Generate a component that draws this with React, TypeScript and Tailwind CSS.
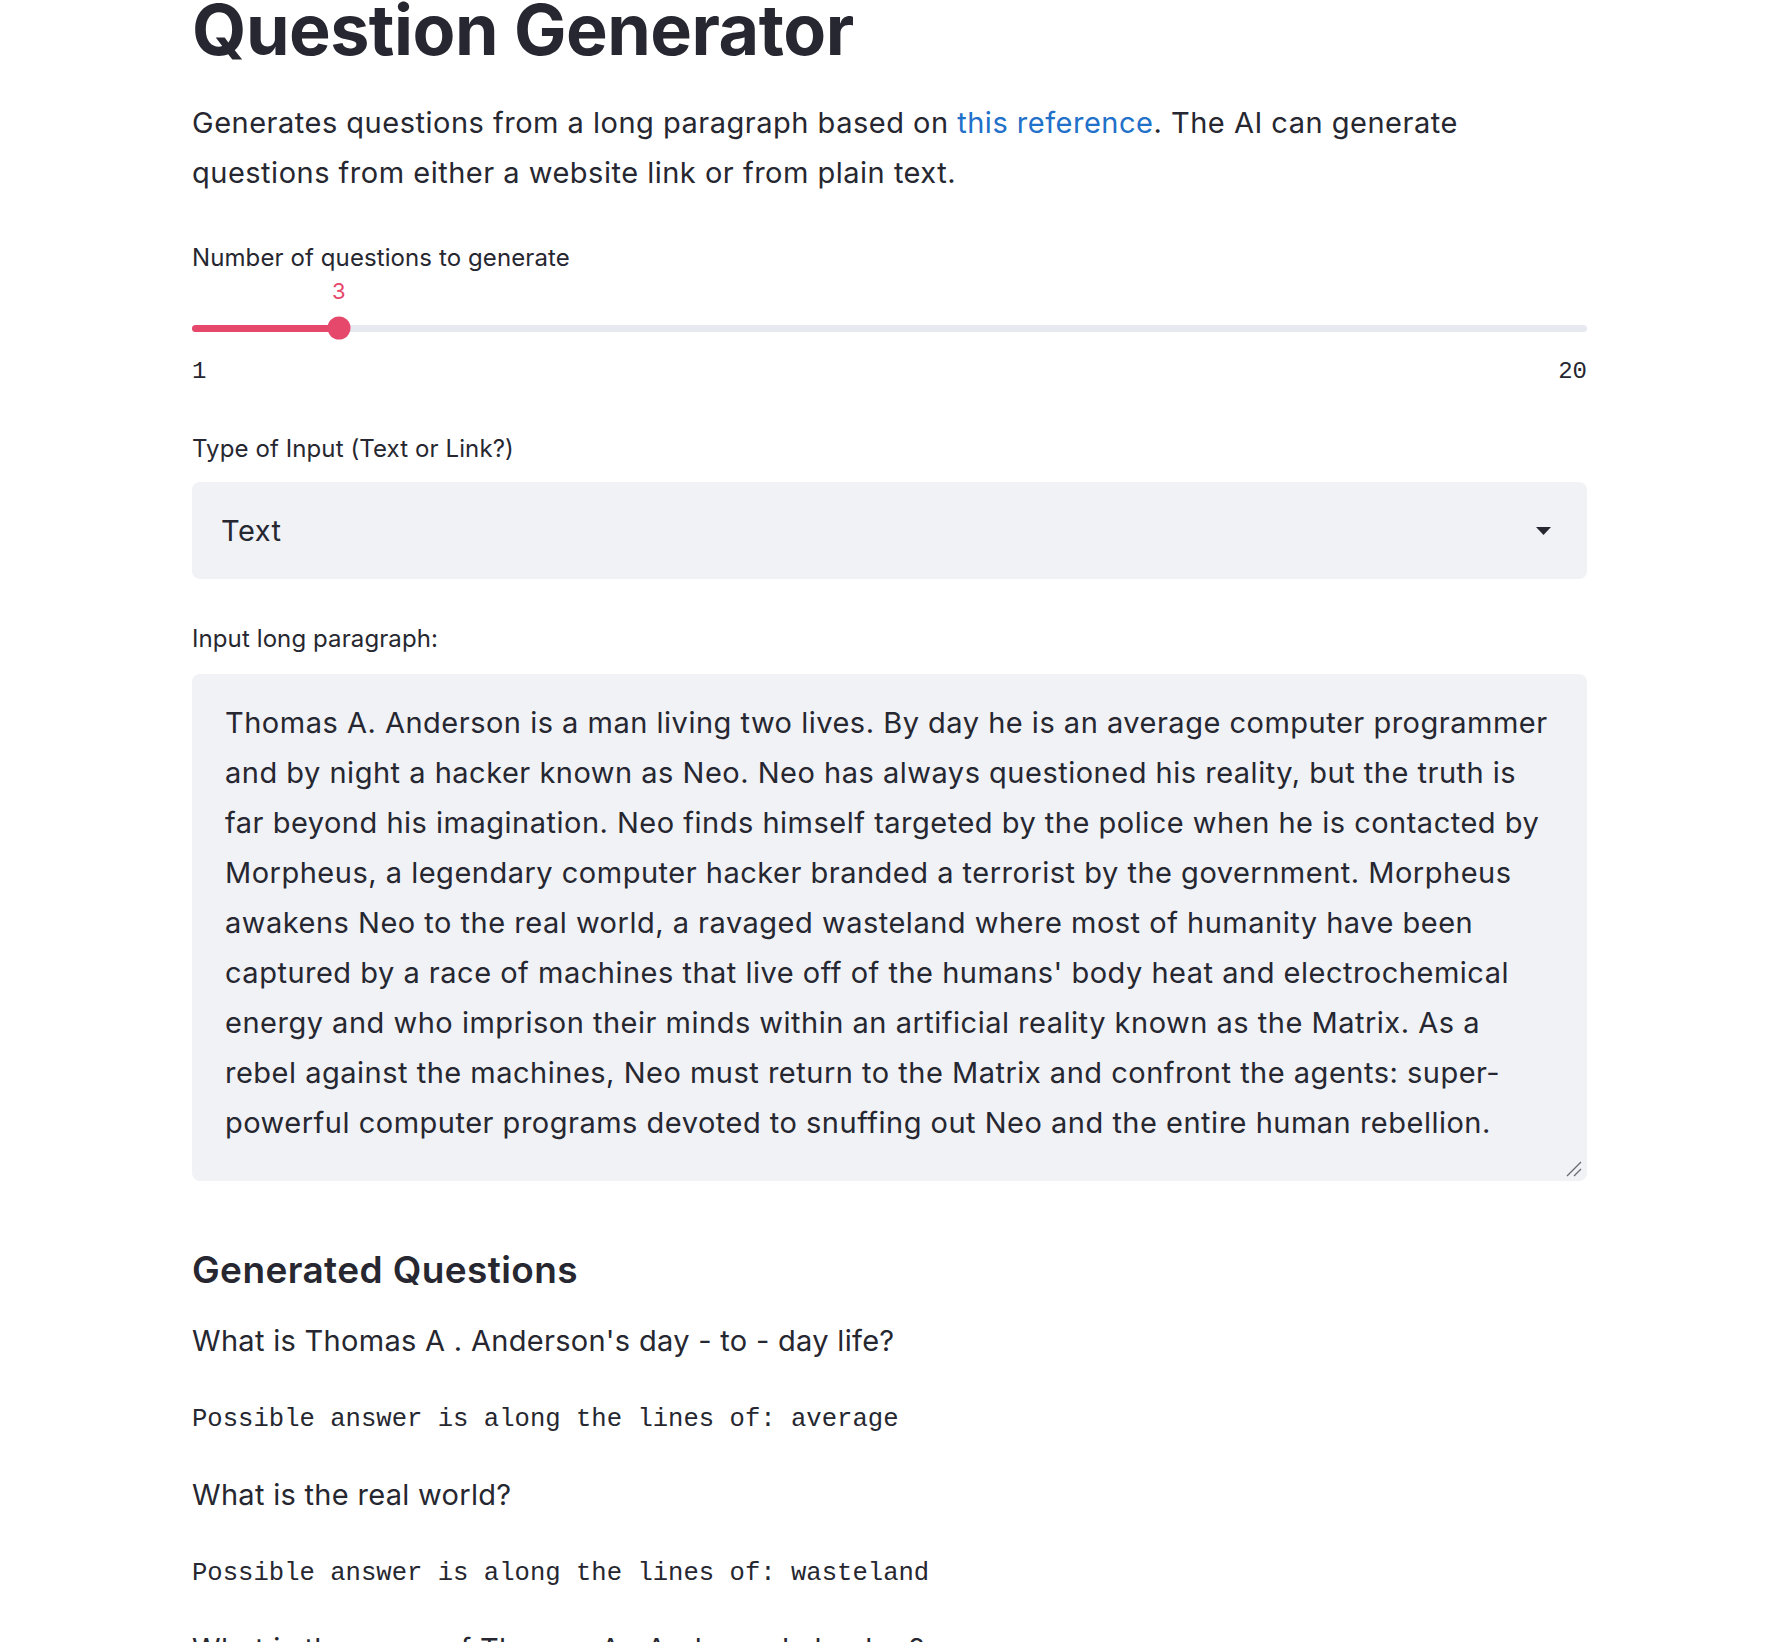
import { useState } from "react";

const paragraphLines = [
  "Thomas A. Anderson is a man living two lives. By day he is an average computer programmer",
  "and by night a hacker known as Neo. Neo has always questioned his reality, but the truth is",
  "far beyond his imagination. Neo finds himself targeted by the police when he is contacted by",
  "Morpheus, a legendary computer hacker branded a terrorist by the government. Morpheus",
  "awakens Neo to the real world, a ravaged wasteland where most of humanity have been",
  "captured by a race of machines that live off of the humans' body heat and electrochemical",
  "energy and who imprison their minds within an artificial reality known as the Matrix. As a",
  "rebel against the machines, Neo must return to the Matrix and confront the agents: super-",
  "powerful computer programs devoted to snuffing out Neo and the entire human rebellion.",
];

const questions = [
  { q: "What is Thomas A . Anderson's day - to - day life?", a: "average" },
  { q: "What is the real world?", a: "wasteland" },
  { q: "What is the name of Thomas A . Anderson's hacker?", a: "Neo" },
];

export default function App() {
  const min = 1;
  const max = 20;
  const [value] = useState(3);
  const [text, setText] = useState(paragraphLines.join("\n"));
  const pct = ((value - min) / (max - min)) * 100;

  return (
    <div className="min-h-screen bg-white text-[#262730] font-['Inter',sans-serif]">
      <main className="ml-[192px] w-[1395px] pb-20">
        <h1 className="text-[70px] font-bold leading-[60px] tracking-[-0.5px]">Question Generator</h1>

        <p className="mt-[38px] text-[29px] leading-[50px] tracking-[0.5px]">
          Generates questions from a long paragraph based on{" "}
          <a href="#" className="text-[#2170c9]">
            this reference
          </a>
          . The AI can generate
          <br />
          questions from either a website link or from plain text.
        </p>

        {/* Slider */}
        <label className="mt-[45px] block text-[24px] leading-[30px] tracking-[0.1px]">
          Number of questions to generate
        </label>
        <div className="relative mt-[5px] h-[26px]">
          <span
            className="absolute top-0 -translate-x-1/2 text-[22px] leading-[26px] text-[#e5486b]"
            style={{ left: `${pct}%` }}
          >
            {value}
          </span>
        </div>
        <div className="relative mt-[12px] flex h-[24px] items-center">
          <div className="h-[7px] w-full rounded-full bg-[#e6e9f0]" />
          <div className="absolute left-0 h-[7px] rounded-full bg-[#e5486b]" style={{ width: `${pct}%` }} />
          <div
            className="absolute top-1/2 h-[23px] w-[23px] -translate-x-1/2 -translate-y-1/2 rounded-full bg-[#e5486b]"
            style={{ left: `${pct}%` }}
          />
        </div>
        <div className="mt-[18px] flex justify-between font-['Liberation_Mono',monospace] text-[24px] leading-[28px]">
          <span>{min}</span>
          <span>{max}</span>
        </div>

        {/* Select */}
        <label className="mt-[48px] block text-[24px] leading-[30px] tracking-[0.1px]">
          Type of Input (Text or Link?)
        </label>
        <div className="mt-[18px] flex h-[97px] items-center justify-between rounded-[8px] bg-[#f0f2f6] pl-[29px] pr-[36px]">
          <span className="text-[29px] tracking-[0.5px]">Text</span>
          <svg width="15" height="8" viewBox="0 0 15 8">
            <path d="M0 0 H15 L7.5 8 Z" fill="#262730" />
          </svg>
        </div>

        {/* Textarea */}
        <label className="mt-[45px] block text-[24px] leading-[30px] tracking-[0.1px]">Input long paragraph:</label>
        <div className="relative mt-[20px]">
          <textarea
            value={text}
            onChange={(e) => setText(e.target.value)}
            className="block h-[507px] w-full resize-none overflow-hidden whitespace-pre rounded-[8px] bg-[#f0f2f6] px-[33px] pt-[24px] text-[29px] leading-[50px] tracking-[0.5px] text-[#262730] outline-none"
          />
          <svg
            className="pointer-events-none absolute bottom-[4px] right-[5px]"
            width="16"
            height="16"
            viewBox="0 0 16 16"
          >
            <path d="M15 1 L1 15 M15 8 L8 15" stroke="#6b6c75" strokeWidth="1.4" />
          </svg>
        </div>

        {/* Output */}
        <h3 className="mt-[67px] text-[37px] font-semibold leading-[44px] tracking-[0.4px]">Generated Questions</h3>
        {questions.map((item, i) => (
          <div key={i}>
            <p className={`${i === 0 ? "mt-[29px]" : "mt-[39px]"} text-[29px] leading-[40px] tracking-[0.3px]`}>
              {item.q}
            </p>
            <pre className="mt-[43px] font-['Liberation_Mono',monospace] text-[25.6px] leading-[32px]">
              Possible answer is along the lines of: {item.a}
            </pre>
          </div>
        ))}
      </main>
    </div>
  );
}
